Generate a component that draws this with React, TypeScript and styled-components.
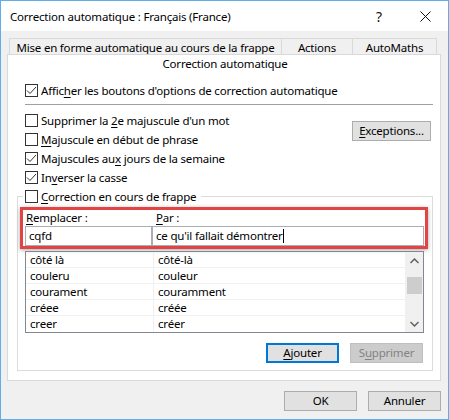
import styled, { createGlobalStyle } from 'styled-components'

const GlobalStyle = createGlobalStyle`
  html, body {
    margin: 0;
    padding: 0;
    background: #ffffff;
  }
  body {
    font-family: "Noto Sans", "Open Sans", sans-serif;
    font-size: 11.5px;
    letter-spacing: -0.2px;
    color: #000000;
  }
  * {
    box-sizing: border-box;
  }
`

const Window = styled.div`
  width: 449px;
  height: 420px;
  border: 1px solid #62ade8;
  background: #f0f0f0;
  display: flex;
  flex-direction: column;
`

const TitleBar = styled.div`
  height: 30px;
  background: #ffffff;
  display: flex;
  align-items: center;
  padding-left: 9px;
`

const Title = styled.div`
  flex: 1;
  font-size: 11.5px;
`

const TitleButton = styled.div`
  width: 46px;
  height: 30px;
  display: flex;
  align-items: center;
  justify-content: center;
  font-size: 14px;
  color: #111;
`

const Body = styled.div`
  flex: 1;
  padding: 7px 7px 9px 6px;
  display: flex;
  flex-direction: column;
`

const TabRow = styled.div`
  display: flex;
  margin: 0 2px;
`

const Tab = styled.div<{ $w: number; $last?: boolean }>`
  width: ${p => p.$w}px;
  height: 16px;
  border-top: 1px solid #d9d9d9;
  border-left: 1px solid #d9d9d9;
  border-right: ${p => (p.$last ? '1px solid #d9d9d9' : 'none')};
  padding-top: 1px;
  line-height: 15px;
  text-align: center;
  white-space: nowrap;
`

const Panel = styled.div`
  background: #ffffff;
  border: 1px solid #d9d9d9;
  padding: 0 7px 9px 9px;
`

const PanelHeader = styled.div`
  height: 18px;
  line-height: 18px;
  text-align: center;
`

const CheckRow = styled.label<{ $top?: number }>`
  display: flex;
  align-items: center;
  height: 19px;
  margin-left: 8px;
  margin-top: ${p => p.$top ?? 0}px;
  white-space: nowrap;
`

const Box = styled.span`
  width: 13px;
  height: 13px;
  border: 1px solid #333333;
  background: #ffffff;
  margin-right: 3px;
  display: inline-flex;
  align-items: center;
  justify-content: center;
  flex-shrink: 0;
`

const Acc = styled.u`
  text-decoration: underline;
  text-underline-offset: 2px;
  text-decoration-thickness: 1px;
`

const Separator = styled.div`
  height: 1px;
  background: #a0a0a0;
  margin: 4px 0 0 8px;
`

const Options = styled.div`
  display: flex;
  margin-top: 6px;
`

const OptionList = styled.div`
  flex: 1;
`

const Button = styled.button<{ $w?: number; $primary?: boolean }>`
  width: ${p => p.$w ?? 73}px;
  height: 20px;
  padding: 0;
  background: #e1e1e1;
  border: ${p => (p.$primary ? '2px solid #0078d7' : '1px solid #adadad')};
  font-family: inherit;
  font-size: inherit;
  letter-spacing: inherit;
  color: #000000;
  line-height: 16px;

  &:disabled {
    background: #cccccc;
    border-color: #bfbfbf;
    color: #838383;
  }
`

const ExceptionsButton = styled(Button)`
  margin: 10px 2px 0 0;
`

const Group = styled.fieldset`
  margin: 0;
  border: 1px solid #dcdcdc;
  padding: 1px 4px 7px 2px;
`

const Legend = styled.legend`
  margin-left: 3px;
  padding: 0 5px 0 2px;
  height: 19px;
  display: flex;
  align-items: center;
  white-space: nowrap;
`

const Highlight = styled.div`
  border: 3px solid #e24444;
  box-shadow: 0 1px 4px rgba(0, 0, 0, 0.35);
  padding: 0 1px 0 2px;
  display: grid;
  grid-template-columns: 127px 1fr;
`

const FieldLabel = styled.div<{ $indent: number }>`
  height: 16px;
  line-height: 16px;
  padding-left: ${p => p.$indent}px;
`

const Input = styled.div`
  height: 20px;
  border: 1px solid #abadb3;
  background: #ffffff;
  padding-left: 3px;
  line-height: 18px;
  display: flex;
  align-items: center;
  white-space: nowrap;
`

const Caret = styled.span`
  display: inline-block;
  width: 1px;
  height: 14px;
  background: #000000;
`

const Table = styled.div`
  margin: 2px 4px 0 5px;
  border: 1px solid #828790;
  display: flex;
  height: 82px;
`

const Rows = styled.div`
  flex: 1;
`

const Row = styled.div`
  display: grid;
  grid-template-columns: 128px 1fr;
  height: 16px;
  border-bottom: 1px solid #f0f0f0;

  &:last-child {
    border-bottom: none;
  }
`

const Cell = styled.div<{ $divider?: boolean }>`
  padding-left: 4px;
  line-height: 15px;
  border-right: ${p => (p.$divider ? '1px solid #f0f0f0' : 'none')};
  white-space: nowrap;
`

const Scrollbar = styled.div`
  width: 18px;
  background: #f0f0f0;
  display: flex;
  flex-direction: column;
  align-items: center;
`

const Arrow = styled.div`
  height: 17px;
  width: 17px;
  display: flex;
  align-items: center;
  justify-content: center;
`

const Thumb = styled.div`
  width: 15px;
  height: 17px;
  background: #cdcdcd;
  margin-top: 8px;
`

const ScrollTrack = styled.div`
  flex: 1;
`

const ButtonRow = styled.div`
  display: flex;
  justify-content: flex-end;
  gap: 11px;
  margin: 10px 5px 0 0;
`

const Footer = styled.div`
  display: flex;
  justify-content: flex-end;
  gap: 11px;
  margin-top: 10px;
`

const Check = ({ checked }: { checked?: boolean }) => (
  <Box>
    {checked && (
      <svg width="11" height="11" viewBox="0 0 11 11">
        <path d="M1 5.5 L4 8.5 L10 2" fill="none" stroke="#333" strokeWidth="1" />
      </svg>
    )}
  </Box>
)

const entries = [
  ['côté là', 'côté-là'],
  ['couleru', 'couleur'],
  ['courament', 'couramment'],
  ['créee', 'créée'],
  ['creer', 'créer'],
]

export default function App() {
  return (
    <>
      <GlobalStyle />
      <Window>
        <TitleBar>
          <Title>Correction automatique : Français (France)</Title>
          <TitleButton>?</TitleButton>
          <TitleButton>
            <svg width="11" height="11" viewBox="0 0 11 11">
              <path d="M0.5 0.5 L10.5 10.5 M10.5 0.5 L0.5 10.5" stroke="#111" strokeWidth="1" />
            </svg>
          </TitleButton>
        </TitleBar>
        <Body>
          <TabRow>
            <Tab $w={272}>Mise en forme automatique au cours de la frappe</Tab>
            <Tab $w={71}>Actions</Tab>
            <Tab $w={85} $last>AutoMaths</Tab>
          </TabRow>
          <Panel>
            <PanelHeader>Correction automatique</PanelHeader>
            <CheckRow $top={8}>
              <Check checked />
              <span>Affic<Acc>h</Acc>er les boutons d'options de correction automatique</span>
            </CheckRow>
            <Separator />
            <Options>
              <OptionList>
                <CheckRow>
                  <Check />
                  <span>Supprimer la <Acc>2</Acc>e majuscule d'un mot</span>
                </CheckRow>
                <CheckRow>
                  <Check />
                  <span><Acc>M</Acc>ajuscule en début de phrase</span>
                </CheckRow>
                <CheckRow>
                  <Check checked />
                  <span>Majuscules au<Acc>x</Acc> jours de la semaine</span>
                </CheckRow>
                <CheckRow>
                  <Check checked />
                  <span>In<Acc>v</Acc>erser la casse</span>
                </CheckRow>
              </OptionList>
              <ExceptionsButton $w={79}><Acc>E</Acc>xceptions...</ExceptionsButton>
            </Options>
            <Group>
              <Legend>
                <Check />
                <span><Acc>C</Acc>orrection en cours de frappe</span>
              </Legend>
              <Highlight>
                <FieldLabel $indent={1}><Acc>R</Acc>emplacer :</FieldLabel>
                <FieldLabel $indent={4}><Acc>P</Acc>ar :</FieldLabel>
                <Input>cqfd</Input>
                <Input>ce qu'il fallait démontrer<Caret /></Input>
              </Highlight>
              <Table>
                <Rows>
                  {entries.map(([from, to]) => (
                    <Row key={from}>
                      <Cell $divider>{from}</Cell>
                      <Cell>{to}</Cell>
                    </Row>
                  ))}
                </Rows>
                <Scrollbar>
                  <Arrow>
                    <svg width="9" height="6" viewBox="0 0 9 6">
                      <path d="M0.5 5 L4.5 1 L8.5 5" fill="none" stroke="#606060" strokeWidth="1.5" />
                    </svg>
                  </Arrow>
                  <Thumb />
                  <ScrollTrack />
                  <Arrow>
                    <svg width="9" height="6" viewBox="0 0 9 6">
                      <path d="M0.5 1 L4.5 5 L8.5 1" fill="none" stroke="#606060" strokeWidth="1.5" />
                    </svg>
                  </Arrow>
                </Scrollbar>
              </Table>
              <ButtonRow>
                <Button $primary><Acc>A</Acc>jouter</Button>
                <Button disabled>S<Acc>u</Acc>pprimer</Button>
              </ButtonRow>
            </Group>
          </Panel>
          <Footer>
            <Button>OK</Button>
            <Button>Annuler</Button>
          </Footer>
        </Body>
      </Window>
    </>
  )
}
